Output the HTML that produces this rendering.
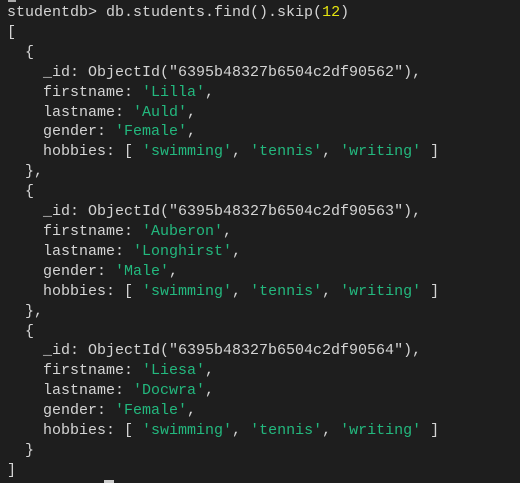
<!DOCTYPE html>
<html><head><style>
body{margin:0;width:520px;height:483px;background:#1e1e1e;overflow:hidden;position:relative}
pre{margin:0;position:absolute;left:7px;top:3px;font-family:"Liberation Mono",monospace;font-size:15px;line-height:19.9px;color:#d4d4d4}
.g{color:#23b87e}.y{color:#e5e510}
.cur{position:absolute;left:104px;top:480px;width:10px;height:3px;background:#ccc}
.top{position:absolute;left:8px;top:0;width:8px;height:2px;background:#aaa}
</style></head><body>
<div class="top"></div>
<pre>studentdb&gt; db.students.find().skip(<span class="y">12</span>)
[
  {
    _id: ObjectId("6395b48327b6504c2df90562"),
    firstname: <span class="g">'Lilla'</span>,
    lastname: <span class="g">'Auld'</span>,
    gender: <span class="g">'Female'</span>,
    hobbies: [ <span class="g">'swimming'</span>, <span class="g">'tennis'</span>, <span class="g">'writing'</span> ]
  },
  {
    _id: ObjectId("6395b48327b6504c2df90563"),
    firstname: <span class="g">'Auberon'</span>,
    lastname: <span class="g">'Longhirst'</span>,
    gender: <span class="g">'Male'</span>,
    hobbies: [ <span class="g">'swimming'</span>, <span class="g">'tennis'</span>, <span class="g">'writing'</span> ]
  },
  {
    _id: ObjectId("6395b48327b6504c2df90564"),
    firstname: <span class="g">'Liesa'</span>,
    lastname: <span class="g">'Docwra'</span>,
    gender: <span class="g">'Female'</span>,
    hobbies: [ <span class="g">'swimming'</span>, <span class="g">'tennis'</span>, <span class="g">'writing'</span> ]
  }
]</pre>
<div class="cur"></div>
</body></html>
